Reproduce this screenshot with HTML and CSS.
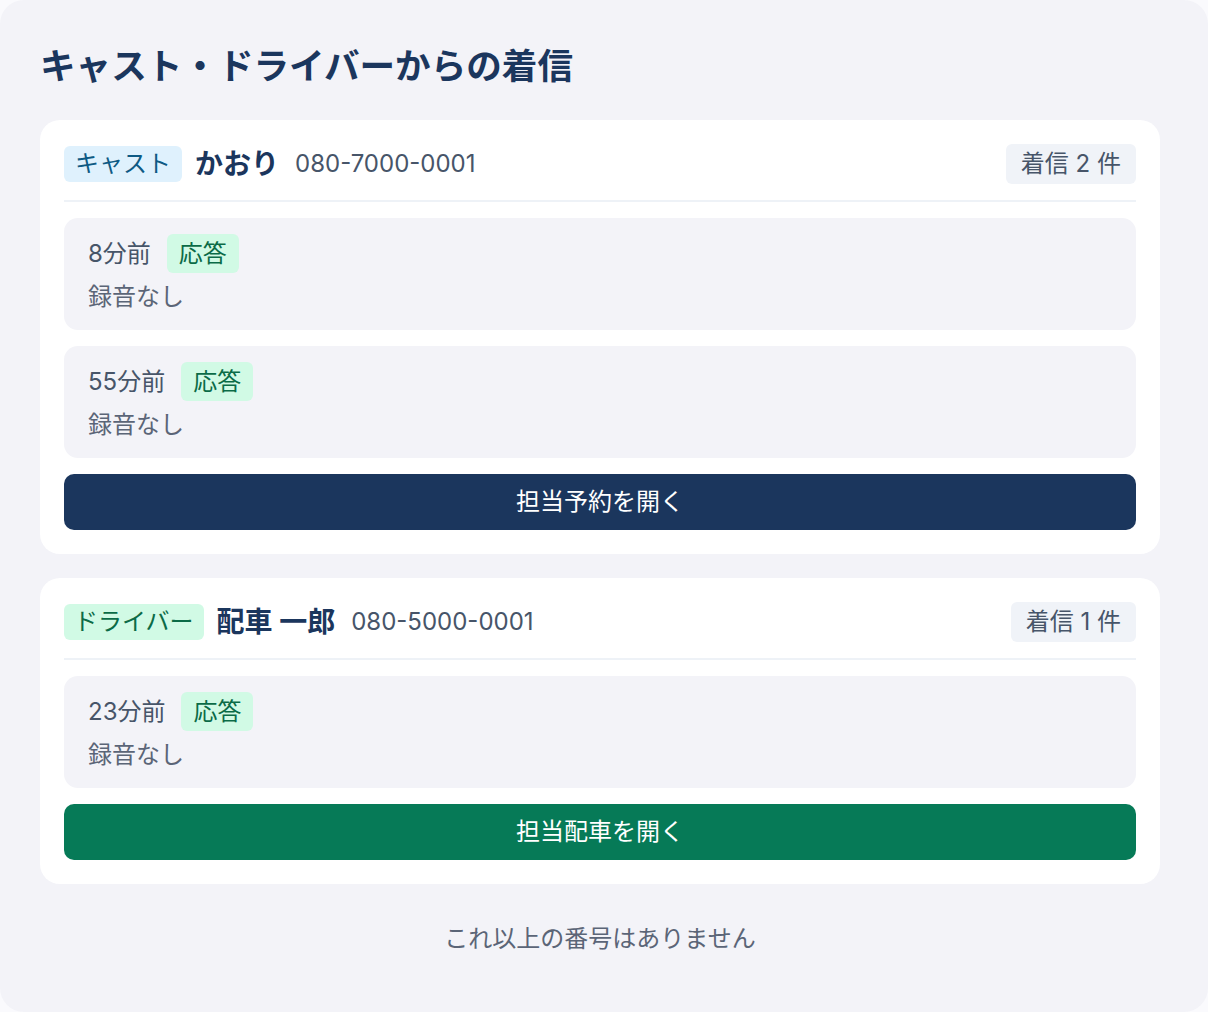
FILE: index.html
```html
<!DOCTYPE html>
<html lang="ja">
<head>
<meta charset="utf-8">
<title>着信</title>
<link rel="stylesheet" href="styles.css">
</head>
<body>
<div class="panel">
  <h1 class="title">キャスト・ドライバーからの着信</h1>

  <section class="card">
    <div class="card-head">
      <span class="role role-cast">キャスト</span>
      <span class="name">かおり</span>
      <span class="phone">080-7000-0001</span>
      <span class="count">着信 2 件</span>
    </div>
    <div class="calls">
      <div class="call">
        <div class="call-row"><span class="ago">8分前</span><span class="status">応答</span></div>
        <div class="rec">録音なし</div>
      </div>
      <div class="call">
        <div class="call-row"><span class="ago">55分前</span><span class="status">応答</span></div>
        <div class="rec">録音なし</div>
      </div>
    </div>
    <button class="open open-navy">担当予約を開く</button>
  </section>

  <section class="card">
    <div class="card-head">
      <span class="role role-driver">ドライバー</span>
      <span class="name">配車 一郎</span>
      <span class="phone">080-5000-0001</span>
      <span class="count">着信 1 件</span>
    </div>
    <div class="calls">
      <div class="call">
        <div class="call-row"><span class="ago">23分前</span><span class="status">応答</span></div>
        <div class="rec">録音なし</div>
      </div>
    </div>
    <button class="open open-green">担当配車を開く</button>
  </section>

  <p class="end">これ以上の番号はありません</p>
</div>
</body>
</html>
```
FILE: styles.css
```css
* { box-sizing: border-box; }
html, body { margin: 0; padding: 0; }
body {
  background: #fafafd;
  font-family: "Inter", "Noto Sans CJK JP", sans-serif;
  color: #475569;
}
.panel {
  width: 1208px;
  min-height: 1012px;
  background: #f3f3f8;
  border-radius: 24px;
  padding: 40px 48px 20px 40px;
}
.title {
  margin: 0 0 26px;
  font-size: 35.6px;
  line-height: 54px;
  font-weight: 700;
  color: #1b365d;
}
.card {
  background: #ffffff;
  border-radius: 20px;
  padding: 24px;
  margin-bottom: 24px;
}
.card-head {
  display: flex;
  align-items: center;
  height: 58px;
  padding-bottom: 16px;
  border-bottom: 2px solid #eef2f7;
  margin-bottom: 16px;
}
.role {
  font-size: 24px;
  line-height: 36px;
  padding: 0 11px;
  border-radius: 6px;
  margin-right: 13px;
}
.role-cast { background: #dff1fd; color: #0e5a84; }
.role-driver { background: #d1fae5; color: #0b6b47; padding: 0 10px; }
.name {
  font-size: 28px;
  line-height: 36px;
  font-weight: 700;
  color: #1b365d;
  margin-right: 16px;
}
.phone {
  font-size: 24px;
  line-height: 36px;
  color: #475569;
}
.count {
  margin-left: auto;
  font-size: 24px;
  line-height: 40px;
  padding: 0 15px;
  background: #f0f3f8;
  border-radius: 6px;
  color: #475569;
}
.calls {
  display: flex;
  flex-direction: column;
  gap: 16px;
}
.call {
  background: #f3f3f8;
  border-radius: 14px;
  padding: 16px 24px 15px;
  display: flex;
  flex-direction: column;
  gap: 6px;
}
.call-row {
  display: flex;
  align-items: center;
  gap: 16px;
  height: 39px;
}
.ago {
  font-size: 24px;
  line-height: 36px;
  color: #475569;
}
.status {
  font-size: 24px;
  line-height: 39px;
  padding: 0 12px;
  background: #d1fae5;
  color: #0b6b47;
  border-radius: 6px;
}
.rec {
  font-size: 24px;
  line-height: 36px;
  color: #5b6577;
}
.open {
  display: block;
  width: 100%;
  height: 56px;
  margin-top: 16px;
  padding: 0;
  border: 0;
  border-radius: 10px;
  font-family: "Inter", "Noto Sans CJK JP", sans-serif;
  font-size: 24px;
  line-height: 36px;
  color: #ffffff;
}
.open-navy { background: #1b365d; }
.open-green { background: #067a57; }
.end {
  margin: 36px 0 0;
  text-align: center;
  font-size: 24px;
  line-height: 38px;
  color: #5b6577;
}
```
